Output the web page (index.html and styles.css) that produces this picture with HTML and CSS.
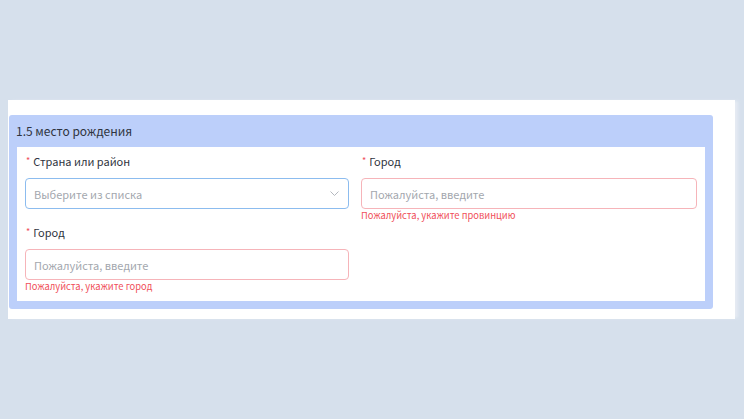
FILE: index.html
```html
<!DOCTYPE html>
<html lang="ru">
<head>
<meta charset="utf-8">
<link rel="stylesheet" href="styles.css">
</head>
<body>
<div class="page">
  <div class="panel">
    <div class="card">
      <div class="card-head">1.5 место рождения</div>
      <div class="card-body">
        <div class="grid">
          <div class="field">
            <div class="label"><span class="req">*</span>Страна или район</div>
            <div class="control select">
              <span class="ph">Выберите из списка</span>
              <svg class="chev" width="9" height="5" viewBox="0 0 9 5"><path d="M0.5 0.5l4 4 4-4" fill="none" stroke="#b4b8bf" stroke-width="1"/></svg>
            </div>
            <div class="err"></div>
          </div>
          <div class="field">
            <div class="label"><span class="req">*</span>Город</div>
            <div class="control invalid"><span class="ph">Пожалуйста, введите</span></div>
            <div class="err">Пожалуйста, укажите провинцию</div>
          </div>
          <div class="field">
            <div class="label"><span class="req">*</span>Город</div>
            <div class="control invalid"><span class="ph">Пожалуйста, введите</span></div>
            <div class="err">Пожалуйста, укажите город</div>
          </div>
        </div>
      </div>
    </div>
  </div>
</div>
</body>
</html>
```

FILE: styles.css
```css
html, body {
  margin: 0;
  padding: 0;
  background: #d6e0ec;
  font-family: "Noto Sans CJK SC", "Noto Sans", sans-serif;
}
.page {
  width: 744px;
  height: 419px;
  padding-top: 100px;
  box-sizing: border-box;
}
.panel {
  margin-left: 8px;
  width: 727px;
  height: 219px;
  background: #fff;
  box-sizing: border-box;
  padding-top: 15px;
  padding-left: 1px;
  box-shadow: 4px 0 3px -1px #e6ebf3;
}
.card {
  width: 704px;
  height: 194px;
  background: #bccffa;
  border-radius: 3px;
  box-sizing: border-box;
  padding: 0 8px 8px 8px;
  display: flex;
  flex-direction: column;
}
.card-head {
  height: 32px;
  line-height: 32px;
  font-size: 12px;
  color: #2f3440;
  margin-left: -1px;
}
.card-body {
  flex: 1;
  background: #fff;
  padding: 6px 8px 0 8px;
}
.grid {
  display: grid;
  grid-template-columns: 324px 336px;
  column-gap: 12px;
}
.field {
  display: flex;
  flex-direction: column;
}
.label {
  height: 16px;
  line-height: 16px;
  font-size: 11px;
  color: #2f3440;
  margin-bottom: 9px;
}
.req {
  color: #f04f5a;
  font-size: 9px;
  margin-right: 3px;
  margin-left: 1px;
  vertical-align: 2px;
}
.control {
  height: 31px;
  box-sizing: border-box;
  border: 1px solid #dcdfe6;
  border-radius: 4px;
  display: flex;
  align-items: center;
  padding: 0 8px;
  font-size: 11px;
}
.select {
  border-color: #8cbcef;
  justify-content: space-between;
  padding-right: 9px;
}
.invalid {
  border-color: #f6b4b9;
}
.ph {
  color: #a3a7ae;
}
.err {
  height: 13px;
  line-height: 13px;
  font-size: 9.4px;
  color: #f04f5a;
  margin-bottom: 2px;
}
```
